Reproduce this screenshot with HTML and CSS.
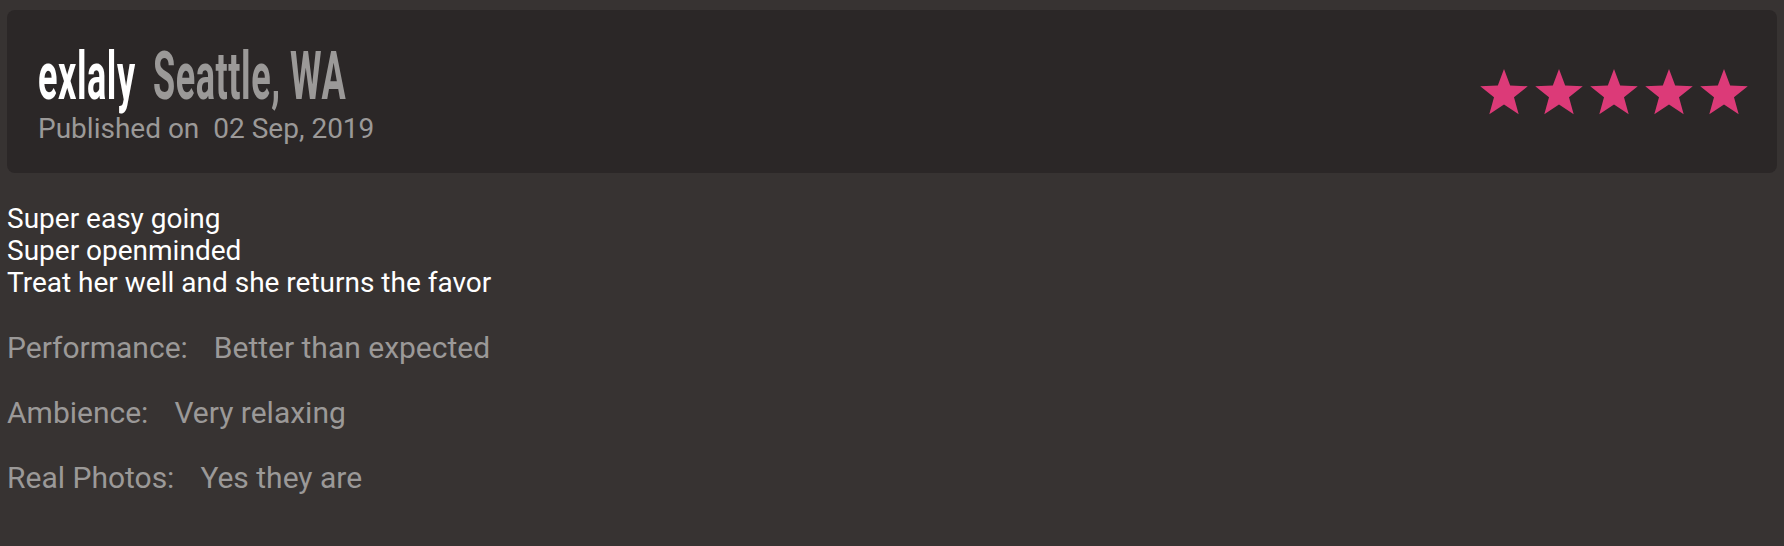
FILE: index.html
```html
<!DOCTYPE html>
<html lang="en">
<head>
  <meta charset="UTF-8">
  <title>Review</title>
  <meta name="viewport" content="width=device-width, initial-scale=1.0">
  <link rel="stylesheet" href="styles.css">
</head>
<body>

  <div class="review">
    <div class="review-head">
      <div class="review-meta">
        <h2 class="review-title"><span class="reviewer">exlaly</span><span class="location">Seattle, WA</span></h2>
        <p class="published"><span class="published-label">Published on</span>02 Sep, 2019</p>
      </div>
      <div class="rating">
        <svg class="star" viewBox="1 0 48 46"><polygon points="25,0 31.17,16.51 48.78,17.27 34.99,28.24 39.69,45.23 25,35.5 10.31,45.23 15.01,28.24 1.22,17.27 18.83,16.51"/></svg>
        <svg class="star" viewBox="1 0 48 46"><polygon points="25,0 31.17,16.51 48.78,17.27 34.99,28.24 39.69,45.23 25,35.5 10.31,45.23 15.01,28.24 1.22,17.27 18.83,16.51"/></svg>
        <svg class="star" viewBox="1 0 48 46"><polygon points="25,0 31.17,16.51 48.78,17.27 34.99,28.24 39.69,45.23 25,35.5 10.31,45.23 15.01,28.24 1.22,17.27 18.83,16.51"/></svg>
        <svg class="star" viewBox="1 0 48 46"><polygon points="25,0 31.17,16.51 48.78,17.27 34.99,28.24 39.69,45.23 25,35.5 10.31,45.23 15.01,28.24 1.22,17.27 18.83,16.51"/></svg>
        <svg class="star" viewBox="1 0 48 46"><polygon points="25,0 31.17,16.51 48.78,17.27 34.99,28.24 39.69,45.23 25,35.5 10.31,45.23 15.01,28.24 1.22,17.27 18.83,16.51"/></svg>
      </div>
    </div>

    <div class="review-body">
      <p class="comment">Super easy going<br>Super openminded<br>Treat her well and she returns the favor</p>

      <p class="detail"><span class="detail-label">Performance:</span>Better than expected</p>
      <p class="detail"><span class="detail-label">Ambience:</span>Very relaxing</p>
      <p class="detail"><span class="detail-label">Real Photos:</span>Yes they are</p>
    </div>
  </div>

</body>
</html>
```

FILE: styles.css
```css
body {
  font-family: Roboto, 'Liberation Sans', sans-serif;
  background: #373332;
  margin: 0;
  padding: 10px 7px;
  color: #fff;
}

.review-head {
  display: flex;
  align-items: center;
  justify-content: space-between;
  background: #2b2727;
  border-radius: 8px;
  padding: 34px 29px 28px 31px;
}

.review-title {
  display: inline-block;
  margin: 0;
  font-size: 66px;
  font-weight: 700;
  line-height: 66px;
  letter-spacing: 1px;
  white-space: nowrap;
  transform: scaleX(0.546);
  transform-origin: left top;
}

.reviewer {
  color: #fff;
  margin-right: 32px;
}

.location {
  color: #9b9998;
}

.published {
  margin: 3px 0 0;
  font-size: 28px;
  line-height: 32px;
  color: #9b9998;
}

.published-label {
  margin-right: 14px;
}

.rating {
  display: flex;
  gap: 7px;
  margin-bottom: 5px;
}

.star {
  width: 48px;
  height: 46px;
  fill: #dc3a78;
}

.review-body {
  padding-top: 30px;
  font-size: 28px;
  line-height: 32px;
}

.comment {
  margin: 0;
}

.detail {
  margin: 33px 0 0;
  font-size: 30px;
  color: #9b9998;
}

.detail-label {
  margin-right: 26px;
}
```
